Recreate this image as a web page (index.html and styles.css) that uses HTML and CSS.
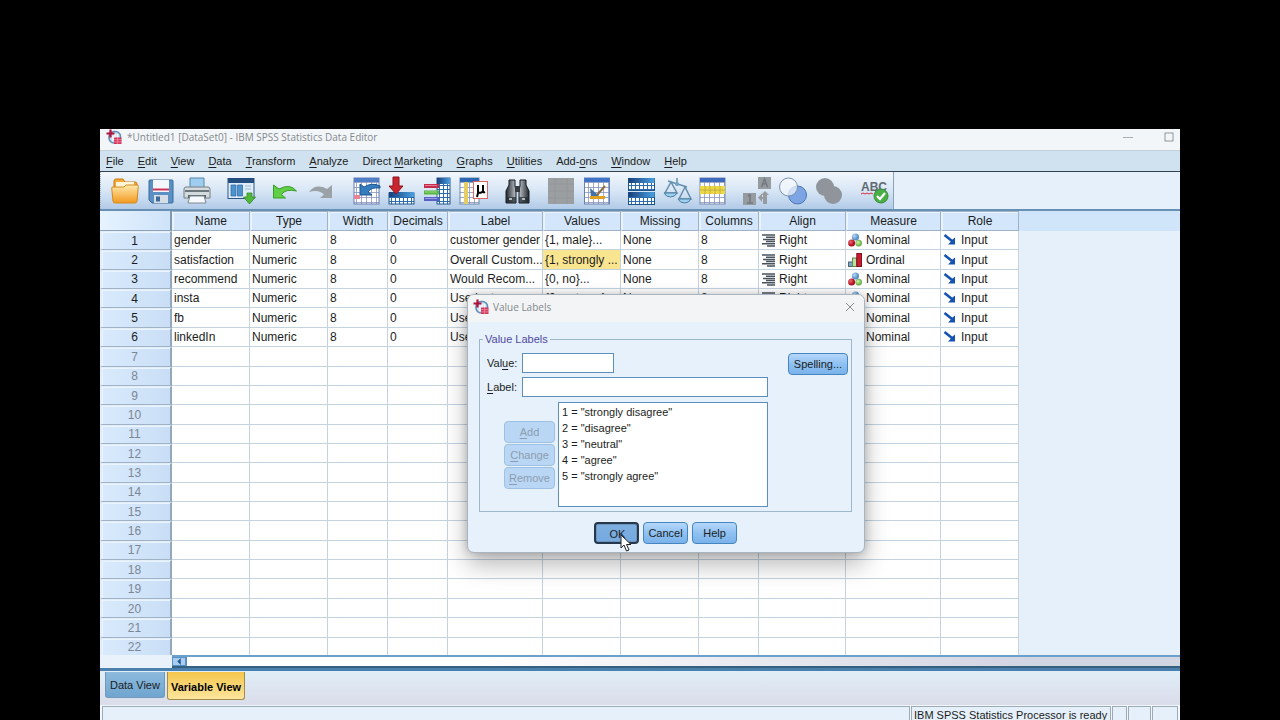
FILE: index.html
```html
<!DOCTYPE html>
<html lang="en">
<head>
<meta charset="utf-8">
<title>IBM SPSS Statistics Data Editor</title>
<link rel="stylesheet" href="styles.css">
</head>
<body>
<svg class="sprite" aria-hidden="true">
  <defs>
    <linearGradient id="g-folder" x1="0" y1="0" x2="0" y2="1"><stop offset="0" stop-color="#ffe9ad"/><stop offset="1" stop-color="#f2991f"/></linearGradient>
    <linearGradient id="g-blue" x1="0" y1="0" x2="1" y2="0"><stop offset="0" stop-color="#173f7c"/><stop offset="1" stop-color="#4aa0e0"/></linearGradient>
    <linearGradient id="g-metal" x1="0" y1="0" x2="1" y2="0"><stop offset="0" stop-color="#20262c"/><stop offset=".5" stop-color="#d5dde2"/><stop offset="1" stop-color="#20262c"/></linearGradient>
    <radialGradient id="g-red" cx=".35" cy=".35"><stop offset="0" stop-color="#ee6b76"/><stop offset="1" stop-color="#b50f22"/></radialGradient>
    <radialGradient id="g-green" cx=".35" cy=".35"><stop offset="0" stop-color="#d8f5b4"/><stop offset="1" stop-color="#76c152"/></radialGradient>
    <radialGradient id="g-sky" cx=".35" cy=".35"><stop offset="0" stop-color="#b9d9f5"/><stop offset="1" stop-color="#5a94cc"/></radialGradient>
    <pattern id="p-grid" width="4" height="4" patternUnits="userSpaceOnUse"><rect width="4" height="4" fill="#fff"/><path d="M0 .5h4M.5 0v4" stroke="#2a6eb0" stroke-width="1"/></pattern>
    <pattern id="p-light" width="5" height="5" patternUnits="userSpaceOnUse"><rect width="5" height="5" fill="#fff"/><path d="M0 .5h5M.5 0v5" stroke="#8793bd" stroke-width=".8"/></pattern>
  </defs>
  <symbol id="app" viewBox="0 0 16 16"><rect x="3" y="2.500" width="11.500" height="11.500" rx="5" fill="#cfe0ee" stroke="#5f8fb8" stroke-width="1.600"/><path d="M9 5v6M11.500 5v4M7 7v5" stroke="#fff" stroke-width="1.300"/><path d="M4.500 .5v8M.5 4.500h8" stroke="#b0123c" stroke-width="2.200"/><rect x="8" y="8.500" width="7.500" height="6.500" fill="#d5355c"/><path d="M8 10.700h7.500M8 12.900h7.500M11.700 8.500v6.500" stroke="#f3a9bb" stroke-width=".6"/></symbol>
  <symbol id="nominal" viewBox="0 0 14 14"><circle cx="7.500" cy="4" r="3.600" fill="url(#g-sky)"/><circle cx="3.600" cy="10" r="3.500" fill="url(#g-red)"/><circle cx="10.700" cy="10.200" r="3.100" fill="url(#g-green)" stroke="#5b9d43" stroke-width=".5"/></symbol>
  <symbol id="ordinal" viewBox="0 0 14 14"><rect x=".5" y="9" width="4" height="4.500" fill="#7fa5c0" stroke="#4b6679"/><rect x="4.500" y="5" width="4" height="8.500" fill="#bce2a0" stroke="#628955"/><rect x="8.800" y=".5" width="4.700" height="13" fill="#c91d31" stroke="#851021"/></symbol>
  <symbol id="right" viewBox="0 0 14 14"><path d="M1 2h13M5 4.200h9M2 6.400h12M5 8.600h9M1 10.800h13M6 13h8" stroke="#48535d" stroke-width="1.500"/></symbol>
  <symbol id="input" viewBox="0 0 14 14"><path d="M1.500 2 9 8" stroke="#1453b0" stroke-width="2.600"/><path d="M5 11.500h7V4.500l-2.500 2-3 3.500z" fill="#1453b0"/></symbol>
</svg>

<main class="window">
  <header class="titlebar">
    <svg class="app-icon"><use href="#app"/></svg>
    <h1 class="title">*Untitled1 [DataSet0] - IBM SPSS Statistics Data Editor</h1>
    <div class="window-controls">
      <button class="plain" type="button" aria-label="Minimize"><svg class="control-icon" viewBox="0 0 10 10"><path d="M0 5.500h10" stroke="#a5abb0"/></svg></button>
      <button class="plain" type="button" aria-label="Maximize"><svg class="control-icon" viewBox="0 0 10 10"><rect x="1" y="1" width="8" height="8" fill="none" stroke="#8f969b"/></svg></button>
    </div>
  </header>

  <nav class="menubar">
    <button class="plain" type="button"><u>F</u>ile</button>
    <button class="plain" type="button"><u>E</u>dit</button>
    <button class="plain" type="button"><u>V</u>iew</button>
    <button class="plain" type="button"><u>D</u>ata</button>
    <button class="plain" type="button"><u>T</u>ransform</button>
    <button class="plain" type="button"><u>A</u>nalyze</button>
    <button class="plain" type="button">Direct <u>M</u>arketing</button>
    <button class="plain" type="button"><u>G</u>raphs</button>
    <button class="plain" type="button"><u>U</u>tilities</button>
    <button class="plain" type="button">Add-<u>o</u>ns</button>
    <button class="plain" type="button"><u>W</u>indow</button>
    <button class="plain" type="button"><u>H</u>elp</button>
  </nav>

  <div class="toolstrip">
    <div class="toolbar" role="toolbar" aria-label="Data editor">
      <div class="tools">
        <button class="tool" type="button" aria-label="Open"><svg viewBox="0 0 28 28"><path d="M3 4q0-2 2-2h7l2 3h10q2 0 2 2v16H3z" fill="#f5a934" stroke="#c97b16"/><path d="M5 5h18v6H5z" fill="#fff6d8"/><path d="M.7 11q0-1 1.300-1h11l2-2h11q1.500 0 1.300 1.500L26 24q-.2 2-2 2H4q-1.800 0-2-2z" fill="url(#g-folder)" stroke="#d58a20"/></svg></button>
        <button class="tool" type="button" aria-label="Save"><svg viewBox="0 0 28 28"><path d="M3 3h22q1 0 1 1v21q0 1-1 1H5l-3-3V4q0-1 1-1z" fill="#5b90c4" stroke="#3b6a99"/><path d="M6 3h16v12H6z" fill="#f4f7fb"/><path d="M6 12.500h16" stroke="#cf3559" stroke-width="2"/><path d="M7 18h14v8H7z" fill="#d5dde5"/><path d="M9 19.500h4v5H9z" fill="#3b6a99"/></svg></button>
        <button class="tool" type="button" aria-label="Print"><svg viewBox="0 0 28 28"><path d="M7 1h14v11H7z" fill="#9fcdef" stroke="#5686a7"/><path d="M3 10h22q2 0 2 2v9H1v-9q0-2 2-2z" fill="#d5dadd" stroke="#757f86"/><path d="M2 14h24" stroke="#6d777e" stroke-width="2"/><path d="M5 18h18v3H5z" fill="#59646b"/><path d="M7 19h14l2 7H5z" fill="#f6fafc" stroke="#7d8991"/></svg></button>
      </div>
      <div class="tools">
        <button class="tool" type="button" aria-label="Recall dialogs"><svg viewBox="0 0 28 28"><rect x="1" y="1.500" width="26" height="20" fill="#dcecf8" stroke="#2c5685"/><path d="M1 1h26v5H1z" fill="#244e80"/><path d="M4 8h5v11H4zM10.500 8h5v11h-5z" fill="#4d94cf" stroke="#2b66a0" stroke-width=".7"/><path d="M18 9h6M18 12h6" stroke="#9eb8cf"/><path d="M20 16h5v4h3.500l-6 7-6-7H20z" fill="#52b83c" stroke="#318a24" stroke-width=".8"/></svg></button>
      </div>
      <div class="tools">
        <button class="tool" type="button" aria-label="Undo"><svg viewBox="0 0 28 28"><path d="M2.500 8v13h12l-4-3.500q4-6 15-3.500Q19 6 8 12z" fill="#61cf45" stroke="#389b2a"/></svg></button>
        <button class="tool" type="button" aria-label="Redo" disabled><svg viewBox="0 0 28 28"><path d="M25 8v13H13l4-3.500Q12 12 2 15q7-9 18-3z" fill="#9aa2a8"/></svg></button>
      </div>
      <div class="tools">
        <button class="tool" type="button" aria-label="Go to case"><svg viewBox="0 0 28 28"><rect x="3" y="1" width="25" height="26" fill="url(#p-light)" stroke="#687daf"/><path d="M3 1h25v4H3z" fill="#4f7ec7"/><path d="M3 18h6v4H3z" fill="#e98296"/><path d="M9 7v11h12l-4-3q3-5 12-4V9q-8-4-16 1z" fill="#347cc0" stroke="#1d5693"/></svg></button>
        <button class="tool" type="button" aria-label="Go to variable"><svg viewBox="0 0 28 28"><rect x="2" y="16" width="25" height="11" fill="url(#p-grid)" stroke="#25558b"/><path d="M2 15h25v5H2z" fill="url(#g-blue)"/><path d="M6 0h6v9h4l-7 8-7-8h4z" fill="#c9252e" stroke="#8d151c"/></svg></button>
        <button class="tool" type="button" aria-label="Variables"><svg viewBox="0 0 28 28"><rect x="14" y="1" width="13" height="26" fill="url(#p-grid)" stroke="#24578f"/><path d="M14 1h13v6H14z" fill="url(#g-blue)"/><path d="M1 9h15" stroke="#c72b4b" stroke-width="4"/><path d="M1 15.500h15" stroke="#58b83c" stroke-width="4"/><path d="M1 22h15" stroke="#5860c5" stroke-width="4"/><path d="M2 8.500h12M2 15h12M2 21.500h12" stroke="#fff" stroke-opacity=".4"/></svg></button>
        <button class="tool" type="button" aria-label="Descriptive statistics"><svg viewBox="0 0 28 28"><rect x="1" y="1" width="19" height="26" fill="url(#p-light)" stroke="#6989aa"/><path d="M1 1h19v4H1z" fill="#2e68b5"/><path d="M5 5h4v22H5z" fill="#e4cd65"/><rect x="14.500" y="4.500" width="14" height="17" fill="#fff" stroke="#df6666"/><path d="M19 8v9M19 15q3 2 5-1V8M24 14q0 2 2 1M19 16l-1 4" fill="none" stroke="#000" stroke-width="2"/></svg></button>
      </div>
      <div class="tools">
        <button class="tool" type="button" aria-label="Find"><svg viewBox="0 0 28 28"><path d="M6 3h6v6l1 4v13H3V14l3-6zM17 3h6v5l3 6v12H16V13l1-4z" fill="url(#g-metal)" stroke="#151b20"/><path d="M12 9h5v6h-5z" fill="#353d43"/><path d="M3 20h10v6H3zM16 20h10v6H16z" fill="#242b30" opacity=".7"/><path d="M6 22h3M19 22h3" stroke="#aeb9c0" stroke-width="2"/></svg></button>
      </div>
      <div class="tools">
        <button class="tool" type="button" aria-label="Insert cases" disabled><svg viewBox="0 0 28 28"><path d="M1 1h26v26H1z" fill="#9b9fa2"/><path d="M1 7h26M1 14h26M1 21h26M8 1v26M20 1v26" stroke="#93979a"/></svg></button>
        <button class="tool" type="button" aria-label="Insert variable"><svg viewBox="0 0 28 28"><rect x="1.500" y="1" width="25" height="26" fill="url(#p-light)" stroke="#6681b0"/><path d="M1.500 1h25v4h-25z" fill="#3f73c8"/><path d="m7 11 7 6 2 3H8z" fill="#4372a9"/><path d="M14 18 22 9" stroke="#8b6f3f" stroke-width="2"/><path d="M7 20.500h15" stroke="#e0a020" stroke-width="3"/></svg></button>
      </div>
      <div class="tools">
        <button class="tool" type="button" aria-label="Split file"><svg viewBox="0 0 28 28"><rect x="1.500" y="1.500" width="26" height="12" fill="url(#p-grid)" stroke="#1c538d"/><rect x="1.500" y="15.500" width="26" height="12" fill="url(#p-grid)" stroke="#1c538d"/><path d="M1.500 1h26v5h-26zM1.500 15h26v5h-26z" fill="url(#g-blue)"/></svg></button>
        <button class="tool" type="button" aria-label="Weight cases"><svg viewBox="0 0 28 28"><path d="m5 4 19 6M14 1v8M8 5 2 16h12zM22 10l-6 12h12z" fill="none" stroke="#648ead" stroke-width="1.500"/><path d="M1 16h13q-2 4-6.500 4T1 16zM15 22h13q-2 4-6.500 4T15 22z" fill="#9ed0f0" stroke="#4b7c9e"/><circle cx="14" cy="7" r="2" fill="#70a4ca"/></svg></button>
        <button class="tool" type="button" aria-label="Select cases"><svg viewBox="0 0 28 28"><rect x="1" y="1" width="25" height="26" fill="url(#p-light)" stroke="#7c8aad"/><path d="M1 1h25v4H1z" fill="#3f69be"/><path d="M1 9h25v8H1z" fill="#eed848"/><path d="M1 13h25M6 9v8M11 9v8M16 9v8M21 9v8" stroke="#b8a83c" stroke-width=".8"/></svg></button>
      </div>
      <div class="tools">
        <button class="tool" type="button" aria-label="Value labels" disabled><svg viewBox="0 0 28 28"><path d="M15 0h13v12H15zM0 16h13v12H0z" fill="#969b9f"/><path d="m18.500 10 3-8 3 8m-5-3h4M5 19l2-1v8M4 26h6" fill="none" stroke="#737980" stroke-width="1.500"/><path d="M20 27v-5h-1v3l-4-4.500 4-4V20h1v-2h-2l4-4 4 4h-2v9z" fill="#969b9f"/></svg></button>
        <button class="tool" type="button" aria-label="Use variable sets"><svg viewBox="0 0 28 28"><circle cx="18.500" cy="18" r="9" fill="#7ea5e3" stroke="#4974b5"/><circle cx="9.500" cy="10" r="9" fill="#f5f9fd" fill-opacity=".7" stroke="#7b93aa"/></svg></button>
        <button class="tool" type="button" aria-label="Show all variables" disabled><svg viewBox="0 0 28 28"><circle cx="10" cy="10" r="9" fill="#8f959a"/><circle cx="18" cy="18" r="9" fill="#8f959a"/></svg></button>
      </div>
      <div class="tools">
        <button class="tool" type="button" aria-label="Spell check"><svg viewBox="0 0 28 28"><text class="abc" x="2" y="14">ABC</text><path d="m2 17 2-1 2 1 2-1 2 1 2-1 2 1" fill="none" stroke="#d32f3f"/><circle cx="22" cy="19" r="7" fill="#49ae45" stroke="#348c34"/><path d="m18 19 3 3 5-6" fill="none" stroke="#fff" stroke-width="2.200"/></svg></button>
      </div>
    </div>
  </div>

  <section class="sheet">
    <table class="grid">
      <colgroup><col class="c-row"><col class="c-m"><col class="c-m"><col class="c-s"><col class="c-s"><col class="c-l"><col class="c-m"><col class="c-m"><col class="c-s"><col class="c-align"><col class="c-l"><col class="c-m"></colgroup>
      <thead><tr><td class="corner"></td><th>Name</th><th>Type</th><th>Width</th><th>Decimals</th><th>Label</th><th>Values</th><th>Missing</th><th>Columns</th><th>Align</th><th>Measure</th><th>Role</th></tr></thead>
      <tbody>
        <tr><th>1</th><td>gender</td><td>Numeric</td><td>8</td><td>0</td><td>customer gender</td><td>{1, male}...</td><td>None</td><td>8</td><td><svg class="cell-icon"><use href="#right"/></svg>Right</td><td><svg class="cell-icon"><use href="#nominal"/></svg>Nominal</td><td><svg class="cell-icon"><use href="#input"/></svg>Input</td></tr>
        <tr><th>2</th><td>satisfaction</td><td>Numeric</td><td>8</td><td>0</td><td>Overall Custom...</td><td class="selected">{1, strongly ...</td><td>None</td><td>8</td><td><svg class="cell-icon"><use href="#right"/></svg>Right</td><td><svg class="cell-icon"><use href="#ordinal"/></svg>Ordinal</td><td><svg class="cell-icon"><use href="#input"/></svg>Input</td></tr>
        <tr><th>3</th><td>recommend</td><td>Numeric</td><td>8</td><td>0</td><td>Would Recom...</td><td>{0, no}...</td><td>None</td><td>8</td><td><svg class="cell-icon"><use href="#right"/></svg>Right</td><td><svg class="cell-icon"><use href="#nominal"/></svg>Nominal</td><td><svg class="cell-icon"><use href="#input"/></svg>Input</td></tr>
        <tr><th>4</th><td>insta</td><td>Numeric</td><td>8</td><td>0</td><td>Use Insta</td><td>{0, not use}...</td><td>None</td><td>8</td><td><svg class="cell-icon"><use href="#right"/></svg>Right</td><td><svg class="cell-icon"><use href="#nominal"/></svg>Nominal</td><td><svg class="cell-icon"><use href="#input"/></svg>Input</td></tr>
        <tr><th>5</th><td>fb</td><td>Numeric</td><td>8</td><td>0</td><td>Use</td><td></td><td></td><td></td><td></td><td><svg class="cell-icon"><use href="#nominal"/></svg>Nominal</td><td><svg class="cell-icon"><use href="#input"/></svg>Input</td></tr>
        <tr><th>6</th><td>linkedIn</td><td>Numeric</td><td>8</td><td>0</td><td>Use</td><td></td><td></td><td></td><td></td><td><svg class="cell-icon"><use href="#nominal"/></svg>Nominal</td><td><svg class="cell-icon"><use href="#input"/></svg>Input</td></tr>
      </tbody>
      <tbody class="unused">
        <tr><th>7</th><td><td><td><td><td><td><td><td><td><td><td></tr>
        <tr><th>8</th><td><td><td><td><td><td><td><td><td><td><td></tr>
        <tr><th>9</th><td><td><td><td><td><td><td><td><td><td><td></tr>
        <tr><th>10</th><td><td><td><td><td><td><td><td><td><td><td></tr>
        <tr><th>11</th><td><td><td><td><td><td><td><td><td><td><td></tr>
        <tr><th>12</th><td><td><td><td><td><td><td><td><td><td><td></tr>
        <tr><th>13</th><td><td><td><td><td><td><td><td><td><td><td></tr>
        <tr><th>14</th><td><td><td><td><td><td><td><td><td><td><td></tr>
        <tr><th>15</th><td><td><td><td><td><td><td><td><td><td><td></tr>
        <tr><th>16</th><td><td><td><td><td><td><td><td><td><td><td></tr>
        <tr><th>17</th><td><td><td><td><td><td><td><td><td><td><td></tr>
        <tr><th>18</th><td><td><td><td><td><td><td><td><td><td><td></tr>
        <tr><th>19</th><td><td><td><td><td><td><td><td><td><td><td></tr>
        <tr><th>20</th><td><td><td><td><td><td><td><td><td><td><td></tr>
        <tr><th>21</th><td><td><td><td><td><td><td><td><td><td><td></tr>
        <tr><th>22</th><td><td><td><td><td><td><td><td><td><td><td></tr>
      </tbody>
    </table>
    <div class="header-rest"></div>
  </section>

  <div class="scroll-row">
    <div class="scrollbar">
      <button class="scroll-left" type="button" aria-label="Scroll left"><svg class="arrow" viewBox="0 0 6 8"><path d="M5 0v8L1 4z" fill="#24588c"/></svg></button>
      <div class="thumb"></div>
    </div>
  </div>

  <div class="views">
    <button class="view" type="button">Data View</button>
    <button class="view current" type="button">Variable View</button>
  </div>

  <footer class="status">
    <div class="status-cell grow"></div>
    <div class="status-cell message">IBM SPSS Statistics Processor is ready</div>
    <div class="status-cell narrow"></div>
    <div class="status-cell medium"></div>
    <div class="status-cell wide"></div>
  </footer>

  <section class="dialog" role="dialog" aria-labelledby="dialog-title">
    <header class="dialog-bar">
      <svg class="app-icon"><use href="#app"/></svg>
      <h2 class="title" id="dialog-title">Value Labels</h2>
      <button class="plain close" type="button" aria-label="Close"><svg class="control-icon" viewBox="0 0 10 10"><path d="m1 1 8 8M9 1 1 9" stroke="#7a7f84" stroke-width=".9"/></svg></button>
    </header>
    <form class="dialog-body">
      <fieldset class="group">
        <legend>Value Labels</legend>
        <div class="group-row">
          <div class="fields">
            <div class="field"><label for="value">Val<u>u</u>e:</label><input class="box short" id="value" type="text"></div>
            <div class="field"><label for="label"><u>L</u>abel:</label><input class="box" id="label" type="text"></div>
            <div class="list-row">
              <div class="list-actions">
                <button class="btn" type="button" disabled><u>A</u>dd</button>
                <button class="btn" type="button" disabled><u>C</u>hange</button>
                <button class="btn" type="button" disabled><u>R</u>emove</button>
              </div>
              <select class="box list" size="6" aria-label="Defined labels">
                <option>1 = "strongly disagree"</option>
                <option>2 = "disagree"</option>
                <option>3 = "neutral"</option>
                <option>4 = "agree"</option>
                <option>5 = "strongly agree"</option>
              </select>
            </div>
          </div>
          <button class="btn spelling" type="button">Spelling...</button>
        </div>
      </fieldset>
      <div class="dialog-actions">
        <button class="btn ok" type="button">OK</button>
        <button class="btn" type="button">Cancel</button>
        <button class="btn" type="button">Help</button>
      </div>
    </form>
    <svg class="pointer" viewBox="0 0 12 18"><path d="M1 1v13l3-3 2.500 6 2.500-1-2.500-5.500H11z" fill="#fff" stroke="#222"/></svg>
  </section>
</main>
</body>
</html>
```

FILE: styles.css
```css
* { box-sizing: border-box; }

body {
  margin: 0;
  height: 100vh;
  padding: 129px 100px 0;
  overflow: hidden;
  background: #000;
  color: #1b1d22;
  font: 11px/16px "Liberation Sans", Arial, sans-serif;
}

button, input, select { font: inherit; color: inherit; margin: 0; }
u { text-underline-offset: 2px; }
.sprite { position: absolute; width: 0; height: 0; }
.plain { border: 0; padding: 0; background: none; }

.window {
  position: relative;
  display: flex;
  flex-direction: column;
  height: 100%;
  overflow: hidden;
  background: #e6f0fa;
}

.titlebar {
  display: flex;
  align-items: center;
  gap: 5px;
  flex: none;
  height: 22px;
  padding: 0 6px 6px 6px;
  background: #f3f6f9;
  border-bottom: 1px solid #c3d0da;
}
.app-icon { flex: none; width: 16px; height: 16px; }
.title {
  margin: 0;
  color: #84888c;
  font: 10px/16px "Open Sans", sans-serif;
  white-space: nowrap;
}
.window-controls { display: flex; gap: 31px; margin-left: auto; }
.control-icon { display: block; width: 10px; height: 10px; }

.menubar {
  display: flex;
  align-items: center;
  gap: 14px;
  flex: none;
  height: 21px;
  padding: 0 6px;
  background: #d0e2ef;
  border-bottom: 1px solid #33434f;
  white-space: nowrap;
}

.toolstrip { display: flex; flex: none; height: 39px; border-bottom: 2px solid #6890b4; }
.toolbar {
  display: flex;
  gap: 8px;
  padding: 0 2px 0 6px;
  border-left: 1px dotted #9fb1c5;
  border-right: 1px solid #8ba3ba;
  background: linear-gradient(#f3f7fc, #d8e6f5 50%, #b2cbe8);
}
.tools { display: flex; }
.tool { width: 36px; padding: 0 4px; border: 0; background: none; }
.tool svg { display: block; width: 28px; height: 28px; overflow: visible; }
.abc { font: bold 12px "Liberation Sans", sans-serif; fill: #5f6973; }

.sheet {
  display: flex;
  flex: 1;
  min-height: 0;
  overflow: hidden;
  align-items: flex-start;
}
.header-rest { flex: 1; height: 20px; background: #d0e5f9; }
.grid {
  flex: none;
  width: 919px;
  height: 446px;
  table-layout: fixed;
  border-collapse: separate;
  border-spacing: 0;
  background: #fff;
  font-size: 12px;
  line-height: 14px;
}
.c-row { width: 72px; }
.c-s { width: 60px; }
.c-m { width: 78px; }
.c-l { width: 95px; }
.c-align { width: 87px; }
.grid th, .grid td { padding: 0 2px; white-space: nowrap; overflow: hidden; }
.grid th {
  font-weight: normal;
  text-align: center;
  background: #d3e6fb;
  border: 1px solid #9fb2c6;
  box-shadow: inset 1px 1px #eaf4ff;
}
.grid thead th, .corner { height: 20px; }
.grid thead th { border-left-color: #e7f1fb; }
.corner { background: linear-gradient(90deg, #e6f3ff, #cfe3f9); border-right: 2px solid #8398ad; border-bottom: 1px solid #8da2b6; }
.grid tbody th { padding: 0 4px 0 1px; border-left: 2px solid #e1edf8; border-top-color: #e1edf8; border-right: 2px solid #94a8bd; background: linear-gradient(90deg, #d9eafc, #c9def6); }
.grid tbody td { border-right: 1px solid #c3d3e0; border-bottom: 1px solid #c3d3e0; }
.grid .unused th { color: #7a8796; }
.grid .selected { background: #f9e58f; }
.cell-icon { width: 14px; height: 14px; margin-right: 4px; vertical-align: -3px; }

.scroll-row { flex: none; height: 16px; padding-left: 72px; background: #e9f2fb; border-bottom: 3px solid #4b7fae; }
.scrollbar { display: flex; height: 13px; border-top: 2px solid #6ba0cd; border-bottom: 2px solid #35617f; background: linear-gradient(90deg, #fff, #fff 30%, #d2d5e2 85%); }
.scroll-left { width: 14px; padding: 0; border: 1px solid #5791c5; background: #a9cdf0; }
.arrow { display: block; width: 6px; height: 7px; margin: auto; }
.thumb { flex: 1; border-left: 1px solid #5791c5; }

.views {
  display: flex;
  align-items: flex-start;
  gap: 2px;
  flex: none;
  height: 34px;
  padding: 1px 5px 0;
  background: linear-gradient(#e0eef8, #dadce9);
}
.view {
  height: 26px;
  padding: 0 4px;
  border: 1px solid #7398b8;
  border-top: 0;
  border-radius: 0 0 3px 3px;
  background: linear-gradient(#8dbadd, #6fa5d0);
}
.view.current { height: 28px; padding: 2px 3px 0; font-weight: bold; color: #000; border-color: #a18b4d; background: linear-gradient(#f5c64c, #fde59c); }

.status { display: flex; gap: 1px; flex: none; height: 15px; padding: 1px 2px 0; background: #f2f7fb; overflow: hidden; }
.status-cell { flex: none; padding-left: 2px; border: 1px solid #9dabb5; border-bottom: 0; background: #e6f0fa; line-height: 16px; }
.grow { flex: 1; }
.message { width: 200px; }
.narrow { width: 15px; }
.medium { width: 23px; }
.wide { width: 26px; }

/* The dialog floats over the sheet */
.dialog {
  position: absolute;
  left: 367px;
  top: 165px;
  width: 398px;
  border: 1px solid #a9b4be;
  border-radius: 7px;
  background: #e6f1fc;
  box-shadow: 0 12px 24px rgba(0, 0, 0, .28), 0 0 8px rgba(0, 0, 0, .2);
}
.dialog-bar { display: flex; align-items: center; gap: 4px; height: 27px; padding: 0 9px 3px 5px; border-radius: 6px 6px 0 0; background: #f2f4f6; }
.close { margin-left: auto; }
.dialog-body { padding: 9px 12px 8px 11px; }
.group { margin: 0; padding: 6px 3px 4px 7px; min-width: 0; border: 1px solid #9db8cd; }
.group legend { padding: 0 2px; margin-left: -4px; color: #4f4a9e; }
.group-row { display: flex; justify-content: space-between; align-items: flex-start; }
.fields { display: flex; flex-direction: column; gap: 4px; width: 281px; }
.field { display: grid; grid-template-columns: 35px 1fr; align-items: center; }
.box { width: 100%; height: 20px; padding: 0 3px; border: 1px solid #5b8fbd; border-radius: 0; background: #fff; outline: 0; }
.short { width: 92px; }
.list-row { display: flex; justify-content: flex-end; gap: 3px; padding-top: 1px; }
.list-actions { display: flex; flex-direction: column; gap: 1px; padding-top: 19px; }
.list { width: 210px; height: 105px; padding: 3px 1px; overflow: hidden; }
.list option { padding: 0 2px; min-height: 16px; line-height: 16px; }

.btn {
  width: 45px;
  height: 22px;
  padding: 0;
  border: 1px solid #4586c0;
  border-radius: 4px;
  background: linear-gradient(#b6d7fa, #8fc1f2 50%, #7ab2ea);
}
.btn:disabled { width: 51px; color: #8c9db0; border-color: #9dc1e2; background: #b9d7f4; }
.spelling { width: 60px; }
.ok { padding: 2px 0 0 2px; border: 2px solid #26384e; box-shadow: inset 0 0 0 1px #6f94b9; background: linear-gradient(#7eaee0, #75a9e0); }
.dialog-actions { display: flex; justify-content: center; gap: 4px; padding-top: 10px; }
.pointer { position: absolute; left: 152px; top: 239px; width: 12px; height: 18px; }
```
